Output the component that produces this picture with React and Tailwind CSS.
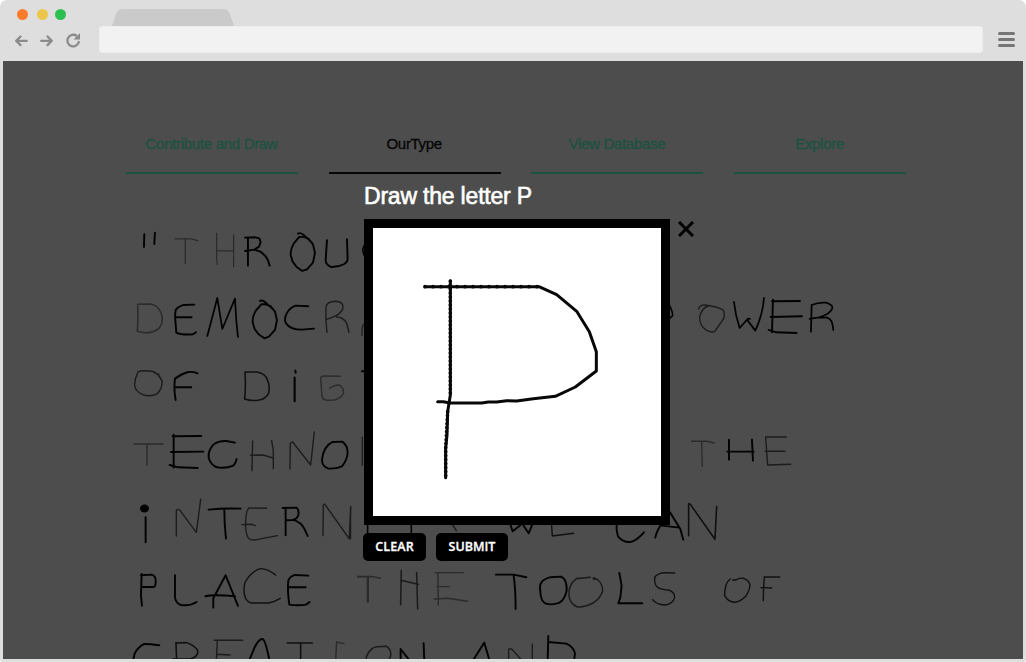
const INK = {
  black: '#020202',
  dark: '#101010',
  mid: '#1c1c1c',
  light: '#2b2b2b',
};

// Each sheet of strokes is drawn on a grid three times finer than the page.
// A stroke is [ink, width, path].
const sheets = [
  {
    x: 120,
    y: 220,
    strokes: [
      ['black', 5, 'M72 42L71 80M104 37L102 71'],
      ['light', 3, 'M164 56L213 56L232 61M195 57L195 130'],
      ['light', 3, 'M289 39L289 112L291 132M289 92H340M340 44V139'],
      ['black', 5, 'M374 52L405 51L417 54L421 66L416 79L402 88L374 92M383 53L383 136M404 89L422 95L436 108L443 120L448 136'],
      ['black', 5, 'M533 40Q540 36 549 43L574 66M549 49L537 50L520 70Q510 86 511 104L517 124L529 140L546 152L560 147L578 127L584 98L578 72L564 55Z'],
      ['black', 5, 'M620 60L616 120Q617 134 632 140Q654 141 672 131Q682 125 682 116L680 57'],
      ['black', 4, 'M732 75L727 88L731 104'],
      ['light', 4, 'M52 252L88 251Q105 253 113 263Q124 275 126 294Q126 314 115 325Q101 336 84 337Q65 338 51 333Q54 300 52 252'],
      ['black', 5, 'M222 253L190 254Q171 260 166 270Q163 285 166 310L168 337Q185 345 218 342L227 336M167 291H214'],
      ['black', 4.5, 'M261 347L291 233L306 326L344 235L348 300L353 350'],
      ['black', 5, 'M419 242Q426 238 435 246L459 268M435 252L423 252L406 272Q396 288 397 306L403 326L415 342L432 354L446 349L464 329L470 300L464 274L450 257Z'],
      ['black', 5, 'M564 258L526 256Q507 263 499 280Q491 295 496 307Q509 328 545 328L581 325'],
      ['mid', 3.5, 'M620 336L617 300V260Q619 244 646 243Q666 244 668 258Q669 271 653 283Q640 290 616 298M649 290Q668 290 679 308L686 336'],
      ['mid', 3, 'M729 313Q724 325 725 346'],
      ['mid', 3.5, 'M53 455Q63 449 95 453Q114 457 126 484Q125 506 110 521Q93 530 70 524Q45 515 43 495Q43 476 53 455M98 454L109 461L116 462'],
      ['black', 5, 'M232 459Q220 454 203 455Q184 460 164 475Q160 505 166 539M164 501H213'],
      ['dark', 4, 'M374 455H410Q434 460 440 475Q450 497 445 518Q438 537 412 540Q390 542 373 536Q377 500 374 455'],
      ['black', 5.5, 'M525 451L526 457M523 472V543'],
      ['light', 3.5, 'M660 468L610 467Q602 467 601 474L605 526Q606 537 618 540L643 539Q663 533 670 518Q670 501 656 494Q644 494 628 504'],
      ['black', 5, 'M725 453H732'],
    ],
  },
  {
    x: 120,
    y: 420,
    strokes: [
      ['light', 3.5, 'M41 71H128M80 72V135'],
      ['black', 5, 'M157 48L243 47M160 43V142M152 95L249 94M148 134L174 141L232 143'],
      ['black', 5, 'M344 67L318 62Q294 61 279 73Q263 91 265 113Q273 139 296 142Q320 144 337 137Q345 132 349 116'],
      ['mid', 3.5, 'M397 62L395 151M391 105L428 104L459 113M454 61L459 91V145'],
      ['mid', 3.5, 'M509 146L510 69L517 65L571 134L582 35'],
      ['black', 5, 'M637 65L666 64Q682 75 682 98Q681 118 665 138Q647 146 625 145Q605 138 605 119Q609 78 637 65'],
      ['mid', 3, 'M726 51V135'],
      ['black', 5, 'M76 291V366'],
      ['mid', 3.5, 'M168 347V271Q171 264 179 270L228 336Q235 288 241 237'],
      ['black', 5, 'M265 268Q310 263 361 265M312 267Q312 310 317 355'],
      ['mid', 3.5, 'M439 264L386 263Q375 273 376 320Q378 353 390 358Q404 361 423 355L472 346M365 313L395 312L405 316'],
      ['black', 5, 'M487 263L529 262Q537 269 534 285Q529 297 518 299L496 300M496 263V345M518 298Q543 306 552 325L562 347'],
      ['mid', 3.5, 'M608 346L609 254L613 251L687 356L691 260'],
      ['black', 5, 'M62 465L94 463Q107 466 106 482Q107 496 101 500H63M64 461L62 526L65 556'],
      ['black', 5, 'M164 465V532Q168 550 182 554Q208 558 229 545'],
      ['black', 5, 'M279 562V534L316 465L353 557M255 528Q280 522 344 528'],
      ['dark', 3.5, 'M466 464Q439 444 420 445Q391 454 374 487Q367 515 376 535Q386 550 400 548L445 548Q462 545 480 534'],
      ['black', 5, 'M564 466L524 464Q508 469 504 481Q501 512 507 553Q532 557 557 553L568 545M507 501H556'],
      ['light', 3, 'M712 468H750M741 469V545'],
      ['black', 5, 'M117 675Q89 671 72 671Q53 680 43 700L38 722'],
      ['dark', 4, 'M167 667L169 722M169 668L199 667Q222 675 232 690Q235 710 210 716H158'],
      ['mid', 3.5, 'M282 660H367M291 662L288 722M289 702L329 704'],
      ['black', 5, 'M388 717L403 681Q416 655 427 656Q435 658 448 722M428 657L421 657'],
      ['dark', 4, 'M501 668H576M541 669V722'],
      ['light', 3.5, 'M649 664L646 722M649 665L671 670'],
    ],
  },
  {
    x: 350,
    y: 500,
    strokes: [
      ['mid', 3, 'M1 18V115'],
      ['black', 4, 'M52 75V101M183 75V101'],
      ['mid', 3.5, 'M308 75L318 91'],
      ['black', 5, 'M481 75L487 93L510 75M519 75L535 99L545 75'],
      ['dark', 3.5, 'M604 75L606 107L670 99'],
      ['light', 3.5, 'M22 230L68 229L90 234M54 230V304'],
      ['mid', 4, 'M153 210L151 313M151 240L204 252M199 217L202 326'],
      ['light', 3.5, 'M254 217H339M263 218L264 314M260 259H297M251 296L291 294L351 303'],
      ['black', 5, 'M437 223H490L528 231M490 225Q496 265 496 326'],
      ['black', 5, 'M599 231L633 229Q651 238 649 272Q642 300 626 308Q604 316 585 309Q571 302 570 272Q563 240 599 231'],
      ['mid', 4, 'M720 231L678 235Q653 255 656 285Q658 309 681 320Q708 321 733 305Q750 293 757 272Q758 243 731 232Q724 238 740 236'],
      ['mid', 4, 'M48 484Q44 464 66 444Q76 438 109 438Q124 448 121 466L115 484'],
      ['black', 5, 'M151 482V446L179 482M220 429L222 482'],
      ['black', 5, 'M367 482L402 427L418 482'],
      ['mid', 3.5, 'M475 484V447Q482 442 489 451L516 482M546 432V482'],
      ['black', 5, 'M594 407L592 482M594 425L648 430Q668 438 674 459L671 484'],
    ],
  },
  {
    x: 600,
    y: 480,
    strokes: [
      ['black', 5, 'M49 130Q47 151 53 168Q69 187 90 185Q108 182 131 156'],
      ['black', 5, 'M165 172Q171 146 185 131M209 96L240 146L249 178M185 136L237 142'],
      ['dark', 4, 'M265 166V70L270 72L344 177L349 79'],
      ['black', 5, 'M57 278L64 316L60 352L54 369H126'],
      ['dark', 3.5, 'M223 278L191 277Q168 281 163 292Q162 315 172 321Q180 328 208 330Q224 337 223 352Q217 373 193 374Q168 373 157 358'],
      ['dark', 3.5, 'M390 296Q373 307 373 346Q383 365 404 366Q421 364 436 348Q450 327 449 313Q444 298 428 294Q416 292 407 299L397 299'],
      ['dark', 3.5, 'M538 290H492Q489 325 489 361M482 322L514 323'],
    ],
  },
  {
    x: 650,
    y: 200,
    strokes: [
      ['black', 4, 'M58 316Q67 334 67 346L58 354'],
      ['mid', 3.5, 'M145 326Q148 313 165 314L197 320L218 329Q225 337 220 355L193 394Q183 397 169 390Q147 377 148 349Q155 322 174 317'],
      ['black', 4.5, 'M251 305Q255 344 268 383L293 355L299 356M290 358L315 391Q338 340 341 293'],
      ['black', 5, 'M365 303L449 302M368 298L365 396M361 350L455 348M355 389L378 396L439 398'],
      ['black', 4.5, 'M482 394L484 314Q505 305 527 307Q549 314 546 324Q541 341 507 351L478 356M507 351L531 352Q547 356 549 389'],
      ['light', 3.5, 'M124 723L168 723L192 728M154 724L156 798'],
      ['black', 5, 'M236 718V778M231 754H310M305 718L308 781'],
      ['mid', 3.5, 'M408 710H346L352 794L421 792M344 753H404'],
    ],
  },
];

const tabs = [
  { label: 'Contribute and Draw' },
  { label: 'OurType', active: true },
  { label: 'View Database' },
  { label: 'Explore' },
];

function Handwriting() {
  return (
    <svg className="absolute inset-0 h-full w-full" viewBox="3 61 1020 598" fill="none" strokeLinecap="round" strokeLinejoin="round">
      {sheets.map((sheet) => (
        <g key={`${sheet.x}-${sheet.y}`} transform={`translate(${sheet.x + 0.3} ${sheet.y + 0.3}) scale(0.33333)`}>
          {sheet.strokes.map(([ink, width, d]) => (
            <path key={d} d={d} stroke={INK[ink]} strokeWidth={width + 0.7} />
          ))}
        </g>
      ))}
      <ellipse cx="144.5" cy="508.500" rx="4.500" ry="4" fill="#020202" />
    </svg>
  );
}

function Toolbar() {
  return (
    <header className="h-[61px] shrink-0">
      <div className="flex h-[26px] items-end pl-[16.500px]">
        <div className="flex gap-2 pb-[6px]">
          <span className="size-[11px] rounded-full bg-[#f97c2c]" />
          <span className="ml-px size-[11px] rounded-full bg-[#ecc64b]" />
          <span className="-ml-px size-[11px] rounded-full bg-[#2dbe50]" />
        </div>
        <svg className="ml-[46.500px] h-[17px] w-[122px]" viewBox="0 0 122 17">
          <path d="M0 17L4 5Q6 0 11 0H111Q116 0 118 5L122 17Z" fill="#cacaca" />
        </svg>
      </div>
      <div className="flex h-[27px] items-center pr-[11px] pl-[14px]">
        <svg className="h-[16px] w-[68px]" viewBox="0 0 68 16" fill="none" stroke="#8b8b8b" strokeWidth="2.300" strokeLinecap="round" strokeLinejoin="round">
          <path d="M12.800 8.800H2.300M6.500 4.500L2.200 8.800L6.500 13.100" />
          <path d="M27.200 8.800H37.700M33.500 4.500L37.800 8.800L33.500 13.100" />
          <path d="M65 9.200A5.800 5.800 0 1 1 62.800 4" strokeLinecap="butt" />
          <path d="M66 1V7.500H59.500Z" fill="#8b8b8b" stroke="none" />
        </svg>
        <div className="ml-[17px] h-[27px] flex-1 rounded-[3px] border border-[#ededed] bg-[#f2f2f2]" />
        <div className="ml-[15px] flex w-[17px] flex-col gap-[2.500px]">
          <span className="h-[3.500px] rounded-full bg-[#767676]" />
          <span className="h-[3.500px] rounded-full bg-[#767676]" />
          <span className="h-[3.500px] rounded-full bg-[#767676]" />
        </div>
      </div>
    </header>
  );
}

function DrawDialog() {
  return (
    <section className="absolute top-[121px] left-[361px] w-[332px]">
      <h1 className="h-[37px] text-[23px] leading-[28px] tracking-[-0.2px] whitespace-nowrap text-white [-webkit-text-stroke:0.6px_white]">
        Draw the letter P
      </h1>
      <div className="flex gap-2">
        <div className="size-[306px] shrink-0 border-[9px] border-black bg-white">
          <svg className="size-full" viewBox="39 39 864 864" fill="none" stroke="#080808" strokeWidth="9" strokeLinecap="round" strokeLinejoin="round">
            <path d="M195 215H537L590 239L651 290L688 350L709 410V468L646 516L586 544L520 551L470 558L440 557L410 561H385L365 564H270L250 560H233" />
            <path d="M271 198V540L263 590L261 660L257 700V788" />
            <g strokeWidth="11" strokeDasharray="0 24">
              <path d="M195 215H537" />
              <path d="M271 198V540M263 590L257 700V788" strokeDasharray="0 12" />
            </g>
          </svg>
        </div>
        <button className="mt-[2px] size-4" aria-label="Close">
          <svg viewBox="0 0 16 16" stroke="#000" strokeWidth="3" strokeLinecap="butt">
            <path d="M1 1L15 15M15 1L1 15" />
          </svg>
        </button>
      </div>
      <div className="mt-2 -ml-px flex gap-[10px] font-['Open_Sans',sans-serif] text-[12.500px] font-semibold text-white [-webkit-text-stroke:0.300px_white]">
        <button className="h-7 w-[63px] rounded-[5px] bg-black tracking-[0.15px]">CLEAR</button>
        <button className="h-7 w-[72px] rounded-[5px] bg-black">SUBMIT</button>
      </div>
    </section>
  );
}

export default function App() {
  return (
    <div className="h-[662px] w-[1026px] bg-white font-['Liberation_Sans',Arial,sans-serif]">
      <div className="flex h-full flex-col rounded-t-[7px] rounded-b-[3px] bg-[#dedede]">
        <Toolbar />
        <main className="relative mx-[3px] mb-[3px] flex-1 overflow-hidden bg-[#4d4d4d]">
          <Handwriting />
          <nav className="relative ml-[123px] flex gap-[30.700px] pt-[61px]">
            {tabs.map((tab) => (
              <a
                key={tab.label}
                className={`flex h-[52px] w-[172px] justify-center border-b-2 pt-3 pr-px text-[15px] leading-5 tracking-[-0.3px] ${
                  tab.active
                    ? 'border-[#060606] text-[#060606] [-webkit-text-stroke:0.300px_#060606]'
                    : 'border-[#1b5242] text-[#1b5242] [-webkit-text-stroke:0.300px_#1b5242]'
                }`}
              >
                {tab.label}
              </a>
            ))}
          </nav>
          <DrawDialog />
        </main>
      </div>
    </div>
  );
}
